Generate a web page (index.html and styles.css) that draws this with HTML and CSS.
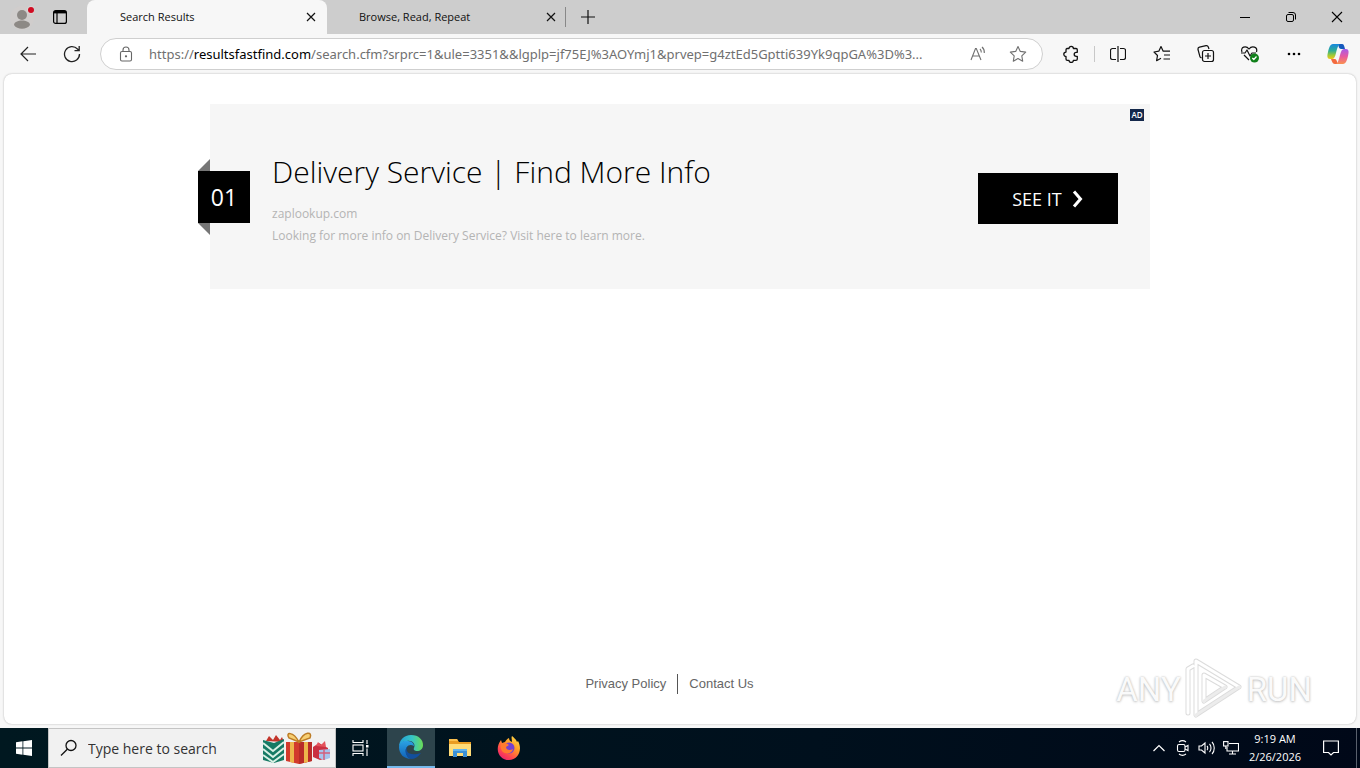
FILE: index.html
```html
<!DOCTYPE html>
<html lang="en">
<head>
  <meta charset="UTF-8" />
  <meta name="viewport" content="width=device-width, initial-scale=1.0"/>
  <title>Search Results</title>
  <link rel="stylesheet" href="styles.css">
</head>
<body>
  <!-- Tab strip -->
  <header class="tab-strip">
    <div class="strip-left">
      <button class="strip-btn" aria-label="Profile">
        <svg width="24" height="26" viewBox="0 0 24 26"><circle cx="12" cy="14" r="12" fill="#d0cdcc"/><circle cx="12" cy="11" r="5" fill="#8d8985"/><path d="M4 21c0-6 16-6 16 0-3 5-13 5-16 0z" fill="#8d8985"/><circle cx="21" cy="6" r="4" fill="#d9d5d3"/><circle cx="21" cy="6" r="3" fill="#d00b22"/></svg>
      </button>
      <button class="strip-btn" aria-label="Tab actions">
        <svg width="16" height="16" viewBox="0 0 16 16" fill="none" stroke="#000" stroke-width="1.2"><rect x="1.600" y="1.600" width="12.800" height="12.800" rx="2"/><path d="M5 4v10" /><path d="M2 3.200h12" stroke-width="2.400"/></svg>
      </button>
    </div>
    <div class="tab active">
      <span class="tab-title">Search Results</span>
      <button class="tab-close" aria-label="Close tab"><svg width="10" height="10" viewBox="0 0 10 10"><path d="M1 1l8 8M9 1l-8 8" stroke="#111" stroke-width="1.2"/></svg></button>
    </div>
    <div class="tab">
      <span class="tab-title">Browse, Read, Repeat</span>
      <button class="tab-close" aria-label="Close tab"><svg width="10" height="10" viewBox="0 0 10 10"><path d="M1 1l8 8M9 1l-8 8" stroke="#111" stroke-width="1.2"/></svg></button>
    </div>
    <button class="new-tab" aria-label="New tab"><svg width="14" height="14" viewBox="0 0 14 14"><path d="M7 0v14M0 7h14" stroke="#111" stroke-width="1.2"/></svg></button>
    <div class="window-buttons">
      <button aria-label="Minimize"><svg width="10" height="10" viewBox="0 0 10 10"><path d="M0 5.5h10" stroke="#000"/></svg></button>
      <button aria-label="Restore"><svg width="10" height="10" viewBox="0 0 10 10" fill="none" stroke="#000"><rect x=".5" y="2.5" width="7" height="7" rx="1.5"/><path d="M2.5 .5H7a2.5 2.5 0 0 1 2.500 2.500v4.500"/></svg></button>
      <button aria-label="Close"><svg width="12" height="12" viewBox="0 0 12 12"><path d="M1 1l10 10M11 1L1 11" stroke="#000" stroke-width="1.1"/></svg></button>
    </div>
  </header>

  <!-- Toolbar -->
  <nav class="toolbar">
    <button class="tool" aria-label="Back"><svg width="16" height="16" viewBox="0 0 16 16" fill="none" stroke="#222" stroke-width="1.2"><path d="M16 8H1M8 1L1 8l7 7"/></svg></button>
    <button class="tool" aria-label="Refresh"><svg width="18" height="18" viewBox="0 0 18 18" fill="none" stroke="#222" stroke-width="1.3"><path d="M16.500 9a7.500 7.500 0 1 1-2-5L16 5.500M16.200 1v4.700h-4.700"/></svg></button>
    <div class="address">
      <svg class="lock" width="14" height="16" viewBox="0 0 14 16" fill="none" stroke="#666" stroke-width="1.1"><rect x="1.500" y="5.500" width="11" height="9.500" rx="1.500"/><path d="M4 5.500V4a3 3 0 0 1 6 0v1.500"/><circle cx="7" cy="10.300" r=".6" fill="#666"/></svg>
      <label class="origin" for="url">https://<b>resultsfastfind.com</b></label>
      <input class="url" id="url" type="text" value="/search.cfm?srprc=1&amp;ule=3351&amp;&amp;lgplp=jf75EJ%3AOYmj1&amp;prvep=g4ztEd5Gptti639Yk9qpGA%3D%3...">
      <button class="address-btn" aria-label="Read aloud"><svg width="16" height="16" viewBox="0 0 16 16" fill="none" stroke="#707070" stroke-width="1.1"><path d="M1 14L5.500 2.500h.8L11 14M2.700 10h6.600M10 3c1 1 1.300 2 1.300 3.500M12 1c1.700 1.500 2.500 3.500 2.300 6"/></svg></button>
      <button class="address-btn" aria-label="Add to favorites"><svg width="18" height="18" viewBox="0 0 18 18" fill="none" stroke="#707070" stroke-width="1.1" stroke-linejoin="round"><path d="M9 1.500l2.300 4.900 5.400.7-3.900 3.700.9 5.400L9 13.600l-4.700 2.600.9-5.400L1.300 7.100l5.400-.7z"/></svg></button>
    </div>
    <button class="tool" aria-label="Extensions"><svg width="16" height="18" viewBox="0 0 16 18" fill="none" stroke="#111" stroke-width="1.3" stroke-linejoin="round"><path d="M4 3.500h2a2.200 2.200 0 0 1 4.400 0H13a1.300 1.300 0 0 1 1.300 1.300v2.500h-1.100a2 2 0 0 0 0 4h1.100v2.700a1.300 1.300 0 0 1-1.300 1.300h-2.600a2.200 2.200 0 0 1-4.400 0H4.300A1.300 1.300 0 0 1 3 14v-2.500a2.200 2.200 0 0 1 0-4.400V4.800A1.300 1.300 0 0 1 4 3.500z"/></svg></button>
    <span class="tool-divider"></span>
    <button class="tool" aria-label="Split screen"><svg width="16" height="16" viewBox="0 0 16 16" fill="none" stroke="#111" stroke-width="1.2"><path d="M6 2.500H2.500a2 2 0 0 0-2 2v7a2 2 0 0 0 2 2H6M10 2.500h3.500a2 2 0 0 1 2 2v7a2 2 0 0 1-2 2H10M8 0v16"/></svg></button>
    <button class="tool" aria-label="Favorites"><svg width="18" height="18" viewBox="0 0 18 18" fill="none" stroke="#111" stroke-width="1.200" stroke-linejoin="round"><path d="M17 6.200h-6.800L8 1.500 5.800 6.200 1 7l3.500 3.500-.9 5.200L8 13.300M11 10h6M10.500 14H17"/></svg></button>
    <button class="tool" aria-label="Collections"><svg width="18" height="18" viewBox="0 0 18 18" fill="none" stroke="#111" stroke-width="1.2"><path d="M4.500 13L3 12 1 4.500a2 2 0 0 1 1.500-2.300l6.500-1.500A2 2 0 0 1 11.300 2L12 4"/><rect x="5.500" y="5.500" width="11" height="11" rx="2"/><path d="M11 8v6M8 11h6"/></svg></button>
    <button class="tool" aria-label="Browser essentials"><svg width="20" height="18" viewBox="0 0 20 18" fill="none" stroke="#111" stroke-width="1.200" stroke-linejoin="round"><path d="M2 7C0 2 6 0 9 4c3-4 9-2 7.500 3M4 10l5 5M1 8h4l2-3 3 6 2-3h4"/><circle cx="14.500" cy="13" r="4.500" fill="#10801a" stroke="none"/><path d="M12.300 13l1.500 1.500 2.700-3" stroke="#fff"/></svg></button>
    <button class="tool" aria-label="Settings and more"><svg width="14" height="4" viewBox="0 0 14 4"><circle cx="2" cy="2" r="1.300"/><circle cx="7" cy="2" r="1.300"/><circle cx="12" cy="2" r="1.300"/></svg></button>
    <button class="tool copilot" aria-label="Copilot">
      <svg width="22" height="22" viewBox="0 0 22 22">
        <defs>
          <linearGradient id="cpA" x1="0" y1="0" x2="0" y2="1"><stop offset="0" stop-color="#1687df"/><stop offset=".45" stop-color="#2fae94"/><stop offset=".75" stop-color="#9fca35"/><stop offset="1" stop-color="#f2c51c"/></linearGradient>
          <linearGradient id="cpB" x1="0" y1="0" x2="0" y2="1"><stop offset="0" stop-color="#a65bea"/><stop offset=".5" stop-color="#e85aa0"/><stop offset="1" stop-color="#fa914e"/></linearGradient>
        </defs>
        <path d="M11 1h4c2 0 2.300 2 3 5h-4c-2 0-2.500-3-3-5z" fill="#1559bd"/>
        <path d="M6 1h7c-2 1-3 5-4 9s-2 6-4 6H3c-3 0-3-3-2-7S3 1 6 1z" fill="url(#cpA)"/>
        <path d="M4 16h4c1.500 0 2 3 3 5H8c-2 0-3-2-4-5z" fill="#f36a3e"/>
        <path d="M16 21H9c2-1 3-5 4-9s2-6 4-6h2c3 0 3 3 2 7s-2 8-5 8z" fill="url(#cpB)"/>
      </svg>
    </button>
  </nav>

  <!-- Page -->
  <main class="page">
    <article class="ad">
      <span class="ad-number">01</span>
      <span class="ad-tag">AD</span>
      <div class="ad-text">
        <h1 class="ad-title">Delivery Service | Find More Info</h1>
        <p>zaplookup.com</p>
        <p>Looking for more info on Delivery Service? Visit here to learn more.</p>
      </div>
      <a class="see-it" href="#">SEE IT
        <svg width="12" height="18" viewBox="0 0 12 18"><path d="M2 1.500L8.500 9 2 16.500" fill="none" stroke="#fff" stroke-width="3"/></svg>
      </a>
    </article>
    <footer class="page-footer">
      <a href="#">Privacy Policy</a>
      <a href="#">Contact Us</a>
    </footer>
    <div class="watermark">
      <span>ANY</span>
      <svg width="58" height="62" viewBox="0 0 58 62" fill="none" stroke-linejoin="round" stroke-linecap="round">
        <path d="M3 55V11l5-3M11 3l43 26-43 28V3zM19 17l21 12-21 14z" stroke="#dcdcdc" stroke-width="5"/>
        <path d="M3 55V11l5-3M11 57V3l43 26M19 43V17l21 12" stroke="#fff" stroke-width="3"/>
        <path d="M54 29L11 57M40 29L19 43" stroke="#ececec" stroke-width="3"/>
      </svg>
      <span>RUN</span>
    </div>
  </main>

  <!-- Taskbar -->
  <footer class="taskbar">
    <button class="start" aria-label="Start"><svg width="16" height="16" viewBox="0 0 16 16" fill="#fff"><path d="M0 2.300l6.500-1v6.200H0zM7.300 1.200L16 0v7.500H7.300zM0 8.400h6.500v6.300L0 13.800zM7.300 8.400H16V16l-8.700-1.200z"/></svg></button>
    <div class="search">
      <svg width="18" height="18" viewBox="0 0 18 18" fill="none" stroke="#111" stroke-width="1.300"><circle cx="11" cy="6.500" r="5"/><path d="M7.300 10.200L1 16.500"/></svg>
      <input type="text" placeholder="Type here to search" aria-label="Type here to search">
      <svg class="gifts" width="70" height="34" viewBox="0 0 70 34">
        <path d="M4 10l3-5 4 4 3-5 4 5 2-3 2 5z" fill="#c3352b"/>
        <path d="M1 9l11 3 10-4v21l-10 3-11-3z" fill="#167a64"/>
        <path d="M1 12l10 8 11-9M1 18l10 8 11-9M1 24l10 7 11-8" fill="none" stroke="#d9f1e5" stroke-width="2"/>
        <path d="M24 11h26v19l-13 3-13-3z" fill="#d23a2c"/>
        <path d="M37 11h13v19l-13 3z" fill="#b92b28"/>
        <path d="M28 11h4v21l-4-1zM42 11h4v20l-4 1z" fill="#edb54b"/>
        <path d="M37 11C31 0 23 1 27 7zM37 11C42 0 51 0 48 7z" fill="#f6cf73" stroke="#bd7c25" stroke-width="1.500"/>
        <path d="M51 16l6-4 5 3 4 2v10l-8 2-7-3z" fill="#ca3041"/>
        <path d="M54 15l2-4 3 3 4-4 1 6z" fill="#e4525b"/>
        <path d="M57 19l11-1v9l-6 2-5-2z" fill="#a7c4ed"/><path d="M62 18v11M57 22h11" stroke="#d45f7c" stroke-width="1.500"/>
      </svg>
    </div>
    <button class="task" aria-label="Task view"><svg width="18" height="16" viewBox="0 0 18 16" fill="none" stroke="#fff" stroke-width="1.100"><path d="M1 0v2.500h10V0M1 16v-2.500h10V16"/><rect x="1" y="5" width="10" height="6"/><path d="M15 0v4M15 8.500V16"/><rect x="14" y="5" width="2.500" height="2.500" fill="#fff" stroke="none"/></svg></button>
    <button class="task edge" aria-label="Edge">
      <svg width="24" height="24" viewBox="0 0 24 24">
        <defs>
          <linearGradient id="eA" x1="0" y1="0" x2="1" y2="0"><stop offset="0" stop-color="#249fd9"/><stop offset=".55" stop-color="#36c5c5"/><stop offset="1" stop-color="#6bdc55"/></linearGradient>
          <linearGradient id="eB" x1="0" y1="0" x2="0" y2="1"><stop offset="0" stop-color="#2ba3e4"/><stop offset="1" stop-color="#1160b7"/></linearGradient>
        </defs>
        <path d="M0 12C0 5 5 0 12 0c8 0 12 5 12 10 0 4-3 6-6 6-2 0-4-1-3-3 2-4-2-8-7-7-4 0-7 3-8 6z" fill="url(#eA)"/>
        <path d="M0 12c1-5 5-7 9-6 4 0 6 3 6 5-5-3-9 1-8 6 0 3 2 6 5 7C5 24 0 19 0 12z" fill="url(#eB)"/>
        <path d="M9 11c-4 5 1 11 13 7-3 4-6 6-10 6-5-2-8-9-3-13z" fill="#124f9d"/>
      </svg>
    </button>
    <button class="task" aria-label="File Explorer">
      <svg width="22" height="20" viewBox="0 0 22 20"><path d="M0 1h8l2 3h12v5H0z" fill="#e99c22"/><path d="M0 6h22v12H0z" fill="#ffdc78"/><path d="M0 1h8l1 2H0z" fill="#fbc04e"/><path d="M4 11h14v8h-4v-4H8v4H4z" fill="#3b91d7"/><path d="M4 11h14v2H4z" fill="#62b4ee"/></svg>
    </button>
    <button class="task" aria-label="Firefox">
      <svg width="24" height="24" viewBox="0 0 24 24">
        <defs><linearGradient id="ff" x1=".9" y1="0" x2=".2" y2="1"><stop offset="0" stop-color="#ffe14a"/><stop offset=".4" stop-color="#ff9a26"/><stop offset=".75" stop-color="#ff4450"/><stop offset="1" stop-color="#e82072"/></linearGradient></defs>
        <path d="M4 4l1 3 3-1c1-2 2-3 4-4 0 2 1 3 3 4 0-3-1-4 0-6 2 2 4 3 5 6l1-1c5 9 0 19-9 19C2 24-3 13 4 4z" fill="url(#ff)"/>
        <circle cx="12" cy="12" r="5.500" fill="#7541cf"/>
        <path d="M4 8c3-2 6-1 8 1l-3 2c0 3 4 4 7 2-1 4-6 6-10 3-2-2-3-5-2-8z" fill="#ff7b2f"/>
      </svg>
    </button>
    <div class="tray">
      <button aria-label="Show hidden icons"><svg width="12" height="8" viewBox="0 0 12 8"><path d="M.500 7L6 1.500 11.500 7" fill="none" stroke="#fff" stroke-width="1.200"/></svg></button>
      <button aria-label="Meet now"><svg width="14" height="16" viewBox="0 0 14 16" fill="none" stroke="#fff" stroke-width="1.100"><rect x="1.500" y="4.500" width="7.500" height="7" rx="1.500"/><path d="M9 7l3-1.500v5L9 9M3 2c2-1.500 5-1.500 7 0M3 14c2 1.500 5 1.500 7 0"/></svg></button>
      <button aria-label="Volume"><svg width="18" height="14" viewBox="0 0 18 14" fill="none" stroke="#fff" stroke-width="1.100"><path d="M1 5v4h2.500L7 12V2L3.500 5zM9 5c1 1 1 3 0 4M11.500 3c2 2 2 6 0 8M14 1c3 3 3 9 0 12"/></svg></button>
      <button aria-label="Network"><svg width="16" height="14" viewBox="0 0 16 14" fill="none" stroke="#fff" stroke-width="1.100"><path d="M6 2.500h9.500v7.500H4V6M9.500 10v3M6 13h7"/><rect x=".6" y=".6" width="4.400" height="4.400"/><path d="M2.800 5v3"/></svg></button>
    </div>
    <button class="clock"><span>9:19 AM</span><span>2/26/2026</span></button>
    <button class="notify" aria-label="Notifications"><svg width="16" height="16" viewBox="0 0 16 16" fill="none" stroke="#fff" stroke-width="1.200"><path d="M.600 1h14.800v11.500H10.500L8 15l-2.500-2.500H.600z"/></svg></button>
  </footer>
</body>
</html>
```
FILE: styles.css
```css
* {
  box-sizing: border-box;
}

body {
  margin: 0;
  min-height: 100vh;
  display: flex;
  flex-direction: column;
  background-color: #f7f7f7;
  font-family: 'Open Sans', 'Noto Sans', sans-serif;
  color: #111;
}

button {
  display: flex;
  align-items: center;
  justify-content: center;
  padding: 0;
  border: none;
  background: none;
  font-family: inherit;
  cursor: pointer;
}

input {
  min-width: 0;
  padding: 0;
  border: none;
  outline: none;
  background: none;
  font-family: inherit;
}

svg {
  flex-shrink: 0;
}

/* Tab strip */
.tab-strip {
  display: flex;
  height: 34px;
  background-color: #cdcdcd;
}

.strip-left {
  display: flex;
  padding: 0 8px 0 3px;
}

.strip-btn {
  width: 38px;
}

.tab {
  display: flex;
  align-items: center;
  justify-content: space-between;
  width: 239px;
  padding: 0 6px 0 32px;
  border-right: 1px solid #888;
  border-image: linear-gradient(transparent 8px, #888 8px, #888 26px, transparent 26px) 1;
  font-size: 11px;
}

.tab.active {
  width: 240px;
  padding: 0 8px 0 33px;
  border: none;
  border-radius: 8px 8px 0 0;
  background-color: #f7f7f7;
}

.tab-title {
  padding-bottom: 2px;
}

.tab-close {
  width: 16px;
  height: 16px;
}

.new-tab {
  width: 44px;
}

.window-buttons {
  display: flex;
  margin-left: auto;
}

.window-buttons button {
  width: 46px;
}

/* Toolbar */
.toolbar {
  display: flex;
  align-items: center;
  height: 40px;
  padding: 0 0 0 6px;
}

.tool {
  width: 44px;
  height: 32px;
}

.tool-divider {
  width: 1px;
  height: 16px;
  margin: 0 1px;
  background-color: #c8c8c8;
}

.address {
  display: flex;
  align-items: center;
  flex: 1;
  height: 32px;
  margin: 0 6px;
  padding: 0 4px 0 18px;
  border: 1px solid #cfcfcf;
  border-radius: 16px;
  background-color: #fff;
  font-family: 'Noto Sans', sans-serif;
  font-size: 13px;
  color: #707070;
}

.lock {
  margin-right: 16px;
}

.origin b {
  font-weight: 400;
  color: #000;
}

.url {
  flex: 1;
  font-size: 13px;
  color: #707070;
}

.address-btn {
  width: 40px;
  height: 28px;
}

/* Page */
.page {
  position: relative;
  flex: 1;
  display: flex;
  flex-direction: column;
  align-items: center;
  margin: 0 4px 4px;
  padding: 30px 16px;
  border-radius: 8px;
  background-color: #fff;
  box-shadow: 0 0 2px rgba(0, 0, 0, 0.3);
}

.ad {
  position: relative;
  display: flex;
  align-items: center;
  justify-content: space-between;
  width: 100%;
  max-width: 940px;
  padding: 46px 32px 42px 62px;
  background-color: #f6f6f6;
}

.ad-number {
  position: absolute;
  left: -12px;
  top: 67px;
  width: 52px;
  line-height: 52px;
  background-color: #000;
  color: #fff;
  font-size: 23px;
  text-align: center;
}

/* folded ribbon corners */
.ad-number::before,
.ad-number::after {
  content: '';
  position: absolute;
  left: 0;
  border-left: 12px solid transparent;
}

.ad-number::before {
  bottom: 100%;
  border-bottom: 12px solid #767676;
}

.ad-number::after {
  top: 100%;
  border-top: 12px solid #767676;
}

.ad-tag {
  position: absolute;
  top: 5px;
  right: 6px;
  width: 14px;
  line-height: 12px;
  background-color: #14284b;
  color: #fff;
  font-size: 8px;
  font-weight: 600;
  text-align: center;
}

.ad-title {
  margin: 0 0 9px;
  font-size: 30px;
  line-height: 44px;
  font-weight: 300;
  color: #000;
}

.ad-text p {
  margin: 0;
  font-size: 12px;
  line-height: 22px;
  color: #b4b4b4;
}

.see-it {
  display: flex;
  align-items: center;
  justify-content: center;
  gap: 10px;
  width: 140px;
  height: 51px;
  background-color: #000;
  color: #fff;
  font-size: 18px;
  text-decoration: none;
}

.page-footer {
  display: flex;
  margin-top: auto;
  margin-right: 21px;
}

.page-footer a {
  padding: 0 11px;
  font-family: 'Liberation Sans', Arial, sans-serif;
  font-size: 13px;
  line-height: 20px;
  color: #666;
  text-decoration: none;
}

.page-footer a + a {
  border-left: 1px solid #555;
}

.watermark {
  position: absolute;
  right: 44px;
  bottom: 4px;
  display: flex;
  align-items: center;
  gap: 4px;
  font-family: Roboto, sans-serif;
  font-size: 33px;
  color: #fafafa;
  text-shadow: 0 0 2px #bbb, 0 1px 3px #ccc;
  pointer-events: none;
}

/* Taskbar */
.taskbar {
  display: flex;
  height: 40px;
  background: linear-gradient(90deg, #001820, #00101d 60%, #000818);
  color: #fff;
}

.start {
  width: 48px;
}

.search {
  display: flex;
  align-items: center;
  width: 288px;
  padding: 0 3px 0 11px;
  border: 1px solid #c4c4c4;
  background-color: #f1f1f1;
}

.search input {
  flex: 1;
  margin-left: 10px;
  font-size: 14px;
}

.search input::placeholder {
  color: #333;
  opacity: 1;
}

.task {
  width: 49px;
}

.task.edge {
  margin-left: 2px;
  width: 48px;
  border-bottom: 2px solid #76b9ed;
  background-color: #2d444c;
}

.tray {
  display: flex;
  margin-left: auto;
}

.tray button {
  width: 24px;
}

.clock {
  flex-direction: column;
  width: 64px;
  color: #fff;
  font-size: 11px;
  line-height: 18px;
}

.notify {
  width: 50px;
  padding-right: 2px;
  margin-right: 3px;
  border-right: 1px solid #59606c;
}
```
